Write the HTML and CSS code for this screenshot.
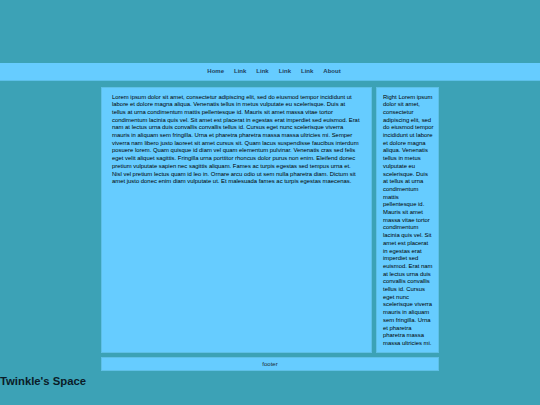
FILE: index.html
```html
<!DOCTYPE html>
<html>
<head>
<meta charset="utf-8">
<link rel="stylesheet" href="styles.css">
</head>
<body>
<nav class="topnav">
  <ul class="nav-list">
    <li><a href="#">Home</a></li>
    <li><a href="#">Link</a></li>
    <li><a href="#">Link</a></li>
    <li><a href="#">Link</a></li>
    <li><a href="#">Link</a></li>
    <li><a href="#">About</a></li>
  </ul>
</nav>
<div class="container">
  <div class="content">
    <main class="main">
      <p>Lorem ipsum dolor sit amet, consectetur adipiscing elit, sed do eiusmod tempor incididunt ut<br>labore et dolore magna aliqua. Venenatis tellus in metus vulputate eu scelerisque. Duis at<br>tellus at urna condimentum mattis pellentesque id. Mauris sit amet massa vitae tortor<br>condimentum lacinia quis vel. Sit amet est placerat in egestas erat imperdiet sed euismod. Erat<br>nam at lectus urna duis convallis convallis tellus id. Cursus eget nunc scelerisque viverra<br>mauris in aliquam sem fringilla. Urna et pharetra pharetra massa massa ultricies mi. Semper<br>viverra nam libero justo laoreet sit amet cursus sit. Quam lacus suspendisse faucibus interdum<br>posuere lorem. Quam quisque id diam vel quam elementum pulvinar. Venenatis cras sed felis<br>eget velit aliquet sagittis. Fringilla urna porttitor rhoncus dolor purus non enim. Eleifend donec<br>pretium vulputate sapien nec sagittis aliquam. Fames ac turpis egestas sed tempus urna et.<br>Nisl vel pretium lectus quam id leo in. Ornare arcu odio ut sem nulla pharetra diam. Dictum sit<br>amet justo donec enim diam vulputate ut. Et malesuada fames ac turpis egestas maecenas.</p>
    </main>
    <aside class="sidebar">
      <p>Right Lorem ipsum<br>dolor sit amet,<br>consectetur<br>adipiscing elit, sed<br>do eiusmod tempor<br>incididunt ut labore<br>et dolore magna<br>aliqua. Venenatis<br>tellus in metus<br>vulputate eu<br>scelerisque. Duis<br>at tellus at urna<br>condimentum<br>mattis<br>pellentesque id.<br>Mauris sit amet<br>massa vitae tortor<br>condimentum<br>lacinia quis vel. Sit<br>amet est placerat<br>in egestas erat<br>imperdiet sed<br>euismod. Erat nam<br>at lectus urna duis<br>convallis convallis<br>tellus id. Cursus<br>eget nunc<br>scelerisque viverra<br>mauris in aliquam<br>sem fringilla. Urna<br>et pharetra<br>pharetra massa<br>massa ultricies mi.</p>
    </aside>
  </div>
  <footer class="footer">footer</footer>
</div>
<h1 class="site-title">Twinkle's Space</h1>
</body>
</html>
```

FILE: styles.css
```css
html, body {
  margin: 0;
  padding: 0;
}
body {
  background: #3ca2b6;
  font-family: "Liberation Sans", Arial, sans-serif;
  color: #000;
  padding-top: 63px;
  min-height: 405px;
  box-sizing: border-box;
}
.topnav {
  background: #66ccff;
  height: 18px;
  border-bottom: 1px solid #5cbfe8;
  box-sizing: border-box;
  display: flex;
  align-items: center;
  justify-content: center;
}
.nav-list {
  list-style: none;
  margin: 0;
  padding: 0 0 0 8px;
  display: flex;
  gap: 10px;
  font-size: 6px;
  line-height: 7px;
}
.nav-list a {
  font-weight: bold;
  color: #1e3f5e;
  text-decoration: none;
}
.container {
  width: 338px;
  margin: 6px auto 0;
  display: flex;
  flex-direction: column;
  gap: 4px;
}
.content {
  display: flex;
  gap: 4px;
}
.main, .sidebar, .footer {
  background: #66ccff;
  border: 1px solid #5ebfe6;
  box-sizing: border-box;
}
.main {
  width: 271px;
  padding: 5.5px 10px 4.5px;
}
.sidebar {
  width: 63px;
  padding: 5.5px 3px 4.5px 6px;
}
.main p, .sidebar p {
  margin: 0;
  font-size: 5.9px;
  line-height: 7.7px;
  white-space: nowrap;
}
.footer {
  height: 14px;
  font-size: 6px;
  color: #1a2a33;
  display: flex;
  align-items: center;
  justify-content: center;
}
.site-title {
  margin: 4px 0 0;
  font-size: 11.3px;
  font-weight: bold;
  color: #0a1c28;
}
```
